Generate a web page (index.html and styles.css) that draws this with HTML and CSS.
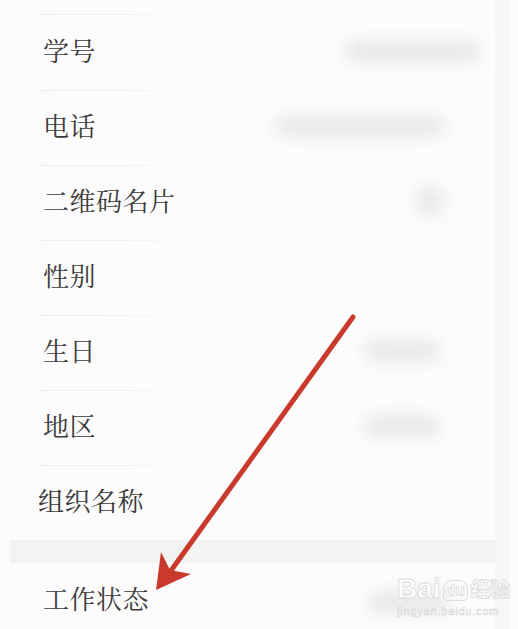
FILE: index.html
```html
<!DOCTYPE html>
<html lang="zh-CN">
<head>
<meta charset="utf-8">
<link rel="stylesheet" href="styles.css">
</head>
<body>
<div class="page">
  <div class="edge"></div>
  <div class="list">
    <div class="top"></div>
    <div class="row"><span class="label">学号</span><span class="val v-xh"></span></div>
    <div class="row"><span class="label">电话</span><span class="val v-dh"></span></div>
    <div class="row"><span class="label">二维码名片</span><span class="val v-qr"></span></div>
    <div class="row"><span class="label">性别</span></div>
    <div class="row"><span class="label">生日</span><span class="val v-sr"></span></div>
    <div class="row"><span class="label">地区</span><span class="val v-dq"></span></div>
    <div class="row last"><span class="label shift">组织名称</span></div>
    <div class="band"></div>
    <div class="row last"><span class="label">工作状态</span><span class="val v-gz"></span></div>
  </div>
  <svg class="arrow" width="518" height="629" viewBox="0 0 518 629">
    <line x1="353" y1="317" x2="170" y2="572" stroke="#c9392c" stroke-width="5" stroke-linecap="round"/>
    <polygon points="156,590 161,552 170,570 191,574" fill="#c9392c"/>
  </svg>
  <div class="wm">
    <div class="wm-top"><span>Bai</span><span class="du">du</span><span class="jy">经验</span></div>
    <div class="wm-url">jingyan.baidu.com</div>
  </div>
</div>
</body>
</html>
```
FILE: styles.css
```css
html, body {
  margin: 0;
  padding: 0;
}
body {
  background: #fcfcfc;
  width: 518px;
  height: 629px;
  overflow: hidden;
}
.page {
  position: relative;
  width: 518px;
  height: 629px;
  overflow: hidden;
}
.edge {
  position: absolute;
  top: 0;
  right: 8px;
  width: 15px;
  height: 629px;
  background: #f7f7f7;
}
.list {
  display: flex;
  flex-direction: column;
}
.top {
  height: 15px;
  position: relative;
}
.top::after, .row::before {
  content: "";
  position: absolute;
  left: 40px;
  top: 0;
  width: 135px;
  height: 1px;
  background: linear-gradient(90deg, #ececec, #f2f2f2 75%, rgba(250,250,250,0));
}
.top::after { top: auto; bottom: 0; }
.row {
  position: relative;
  height: 75px;
  display: flex;
  align-items: center;
  justify-content: space-between;
}
.top + .row::before { display: none; }
.band + .row::before { display: none; }
.label {
  margin-left: 43px;
  margin-bottom: 6px;
  font-family: "Noto Serif CJK SC", "Noto Sans CJK SC", sans-serif;
  font-size: 26px;
  font-weight: 400;
  color: #3a3a3a;
  letter-spacing: 0.5px;
}
.label.shift { margin-left: 38px; }
.val {
  display: block;
  height: 22px;
  margin-bottom: 4px;
  background: #e8e8e8;
  border-radius: 11px;
  filter: blur(8px);
}
.v-xh { width: 135px; margin-right: 38px; }
.v-dh { width: 170px; margin-right: 73px; }
.v-qr { width: 28px; height: 30px; border-radius: 50%; margin-right: 74px; }
.v-sr { width: 76px; margin-right: 78px; }
.v-dq { width: 76px; margin-right: 78px; }
.v-gz { width: 80px; margin-right: 70px; margin-top: 6px; }
.band {
  height: 23px;
  margin: 0 8px 0 10px;
  background: #f3f3f3;
}
.arrow {
  position: absolute;
  left: 0;
  top: 0;
}
.wm {
  position: absolute;
  left: 397px;
  top: 574px;
  color: #fff;
  font-family: "Liberation Sans", Arial, sans-serif;
}
.wm-top {
  display: flex;
  align-items: flex-end;
  font-size: 28px;
  font-weight: bold;
  line-height: 30px;
  -webkit-text-stroke: 0.8px #dadada;
}
.du {
  font-size: 16px;
  line-height: 19px;
  border: 1.5px solid #dcdcdc;
  border-radius: 9px 9px 4px 4px;
  padding: 0 2px;
  margin: 0 2px 3px 2px;
  -webkit-text-stroke: 0.6px #d0d0d0;
}
.jy {
  font-family: "Noto Sans CJK SC", sans-serif;
  font-size: 20px;
  line-height: 26px;
  margin-bottom: 2px;
}
.wm-url {
  font-size: 11px;
  line-height: 12px;
  margin-top: 1px;
  color: #f4f4f4;
  -webkit-text-stroke: 0.5px #d6d6d6;
  letter-spacing: 0.8px;
}
```
